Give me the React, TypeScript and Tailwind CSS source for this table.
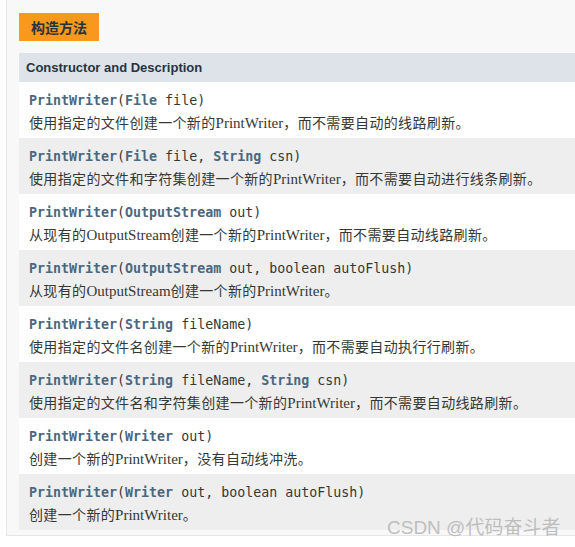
const CODE_FONT = { fontFamily: '"DejaVu Sans Mono", "Liberation Mono", monospace' };

type Part = { t: string; link?: boolean };

const ROWS: { sig: Part[]; desc: string }[] = [
  {
    sig: [{ t: 'PrintWriter', link: true }, { t: '(' }, { t: 'File', link: true }, { t: ' file)' }],
    desc: '使用指定的文件创建一个新的PrintWriter，而不需要自动的线路刷新。',
  },
  {
    sig: [
      { t: 'PrintWriter', link: true }, { t: '(' }, { t: 'File', link: true }, { t: ' file, ' },
      { t: 'String', link: true }, { t: ' csn)' },
    ],
    desc: '使用指定的文件和字符集创建一个新的PrintWriter，而不需要自动进行线条刷新。',
  },
  {
    sig: [{ t: 'PrintWriter', link: true }, { t: '(' }, { t: 'OutputStream', link: true }, { t: ' out)' }],
    desc: '从现有的OutputStream创建一个新的PrintWriter，而不需要自动线路刷新。',
  },
  {
    sig: [
      { t: 'PrintWriter', link: true }, { t: '(' }, { t: 'OutputStream', link: true },
      { t: ' out, boolean autoFlush)' },
    ],
    desc: '从现有的OutputStream创建一个新的PrintWriter。',
  },
  {
    sig: [{ t: 'PrintWriter', link: true }, { t: '(' }, { t: 'String', link: true }, { t: ' fileName)' }],
    desc: '使用指定的文件名创建一个新的PrintWriter，而不需要自动执行行刷新。',
  },
  {
    sig: [
      { t: 'PrintWriter', link: true }, { t: '(' }, { t: 'String', link: true }, { t: ' fileName, ' },
      { t: 'String', link: true }, { t: ' csn)' },
    ],
    desc: '使用指定的文件名和字符集创建一个新的PrintWriter，而不需要自动线路刷新。',
  },
  {
    sig: [{ t: 'PrintWriter', link: true }, { t: '(' }, { t: 'Writer', link: true }, { t: ' out)' }],
    desc: '创建一个新的PrintWriter，没有自动线冲洗。',
  },
  {
    sig: [
      { t: 'PrintWriter', link: true }, { t: '(' }, { t: 'Writer', link: true },
      { t: ' out, boolean autoFlush)' },
    ],
    desc: '创建一个新的PrintWriter。',
  },
];

function Desc({ text }: { text: string }) {
  // latin words use a serif face, the chinese keeps the sans CJK face
  const parts = text.split(/([A-Za-z]+)/).filter(Boolean);
  return (
    <p className="text-[14px] leading-[22px] text-[#353833] whitespace-nowrap" style={{ fontFamily: '"Noto Sans CJK SC", sans-serif' }}>
      {parts.map((p, i) =>
        /^[A-Za-z]+$/.test(p) ? (
          <span key={i} className="text-[15px]" style={{ fontFamily: '"Liberation Serif", serif' }}>{p}</span>
        ) : (
          <span key={i} className="tracking-[0.35px]">{p}</span>
        )
      )}
    </p>
  );
}

export default function App() {
  return (
    <div className="relative w-[575px] h-[547px] bg-white overflow-hidden">
      <div className="ml-[6px] w-[600px] bg-[#f8f8f8] border-l border-b border-[#e6e6e6] pl-[12px] pt-[13px] pb-[5px]">
        <div className="inline-flex items-center h-[28px] px-[12px] bg-[#f8981d]">
          <span className="text-[14px] font-bold text-[#253441]" style={{ fontFamily: '"Noto Sans CJK SC", sans-serif' }}>构造方法</span>
        </div>
        <div className="mt-[12px]">
          <div className="h-[29px] flex items-center pl-[7px] bg-[#dee3e9]">
            <span className="text-[13px] font-bold text-[#253441]" style={{ fontFamily: '"Liberation Sans", Arial, sans-serif' }}>
              Constructor and Description
            </span>
          </div>
          {ROWS.map((row, i) => (
            <div key={i} className={`h-[56px] pl-[10px] pt-[9px] ${i % 2 === 0 ? 'bg-white' : 'bg-[#eeeeee]'}`}>
              <p className="text-[13.3px] leading-[20px] whitespace-pre" style={CODE_FONT}>
                {row.sig.map((p, j) => (
                  <span key={j} className={p.link ? 'font-bold text-[#4a6782]' : 'text-[#353833]'}>{p.t}</span>
                ))}
              </p>
              <Desc text={row.desc} />
            </div>
          ))}
        </div>
      </div>
      <span
        className="absolute left-[387px] top-[514px] text-[19px] text-[#b4b4b4]/85 whitespace-nowrap"
        style={{ fontFamily: '"Liberation Sans", "Noto Sans CJK SC", sans-serif' }}
      >
        CSDN @代码奋斗者
      </span>
    </div>
  );
}
